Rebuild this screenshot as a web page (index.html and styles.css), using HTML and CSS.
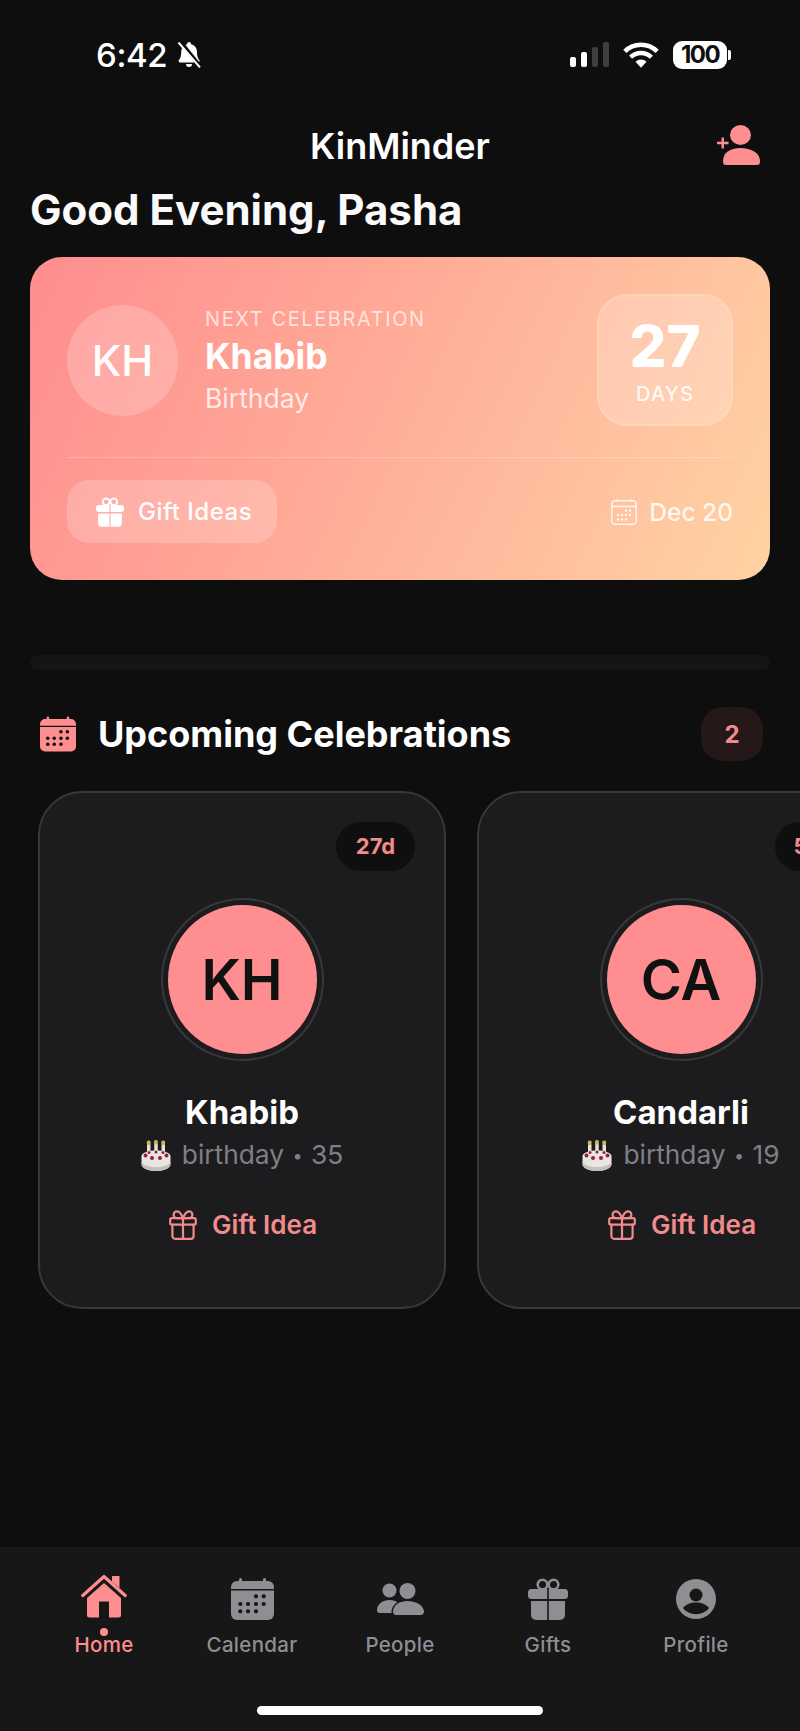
FILE: index.html
```html
<!DOCTYPE html>
<html lang="en">
  <head>
    <meta charset="UTF-8" />
    <meta name="viewport" content="width=device-width, initial-scale=1.0" />
    <title>KinMinder</title>
    <link rel="stylesheet" href="styles.css">
  </head>
  <body>
    <svg class="defs" width="0" height="0">
      <symbol id="gift-line" viewBox="0 0 28 30">
        <g fill="none" stroke="currentColor" stroke-width="2.2" stroke-linejoin="round" stroke-linecap="round">
          <rect x="1.2" y="8.2" width="25.6" height="6.4" rx="1.6" />
          <path d="M3.4 14.6V26a2.8 2.8 0 0 0 2.8 2.8h15.6a2.8 2.8 0 0 0 2.8-2.8V14.6" />
          <path d="M14 8.2v20.6" />
          <path d="M14 8.2C12.6 4.4 10.6 1.4 8 1.4a3.4 3.4 0 0 0 0 6.8h6zM14 8.2c1.4-3.8 3.4-6.8 6-6.8a3.4 3.4 0 0 1 0 6.8h-6z" />
        </g>
      </symbol>
      <symbol id="gift-fill" viewBox="0 0 40 42">
        <circle cx="14.5" cy="6.5" r="4.8" fill="none" stroke="currentColor" stroke-width="2.6" />
        <circle cx="25.5" cy="6.5" r="4.8" fill="none" stroke="currentColor" stroke-width="2.6" />
        <path d="M3.5 11H19.200v10H3.500A3.500 3.500 0 0 1 0 17.500v-3A3.500 3.500 0 0 1 3.500 11zM20.800 11h15.700a3.500 3.500 0 0 1 3.500 3.500v3a3.500 3.500 0 0 1-3.500 3.500H20.800z" fill="currentColor" />
        <path d="M3 23h16.200v19H8a5 5 0 0 1-5-5zM20.800 23H37v14a5 5 0 0 1-5 5H20.800z" fill="currentColor" />
      </symbol>
      <symbol id="calendar-fill" viewBox="0 0 43 42">
        <path d="M8 3V1.500a1.500 1.500 0 0 1 3 0V3h21V1.500a1.500 1.500 0 0 1 3 0V3h2a6 6 0 0 1 6 6v2H0V9a6 6 0 0 1 6-6z" fill="currentColor" />
        <path d="M0 12.500h43V36a6 6 0 0 1-6 6H6a6 6 0 0 1-6-6z" fill="currentColor" />
        <g fill="var(--dots)">
          <circle cx="25" cy="18.300" r="2.100" /><circle cx="32.700" cy="18.300" r="2.100" />
          <circle cx="9.300" cy="26" r="2.100" /><circle cx="17" cy="26" r="2.100" /><circle cx="25" cy="26" r="2.100" /><circle cx="32.700" cy="26" r="2.100" />
          <circle cx="9.300" cy="33.300" r="2.100" /><circle cx="17" cy="33.300" r="2.100" /><circle cx="25" cy="33.300" r="2.100" />
        </g>
      </symbol>
      <symbol id="cake" viewBox="0 0 30 31">
        <g fill="#e9e3d6"><rect x="6" y="4" width="3.500" height="12" rx="1" /><rect x="13.250" y="3" width="3.500" height="13" rx="1" /><rect x="20.500" y="4" width="3.500" height="12" rx="1" /></g>
        <g fill="#c9b45e"><rect x="5.800" y="0.500" width="3.800" height="4.500" rx="1.500" /><rect x="13" y="0" width="3.800" height="4.500" rx="1.500" /><rect x="20.300" y="0.500" width="3.800" height="4.500" rx="1.500" /></g>
        <path d="M0.500 16c0-3 6-5.500 14.500-5.500S29.500 13 29.500 16v8c0 4-6 7-14.500 7S.5 28 .5 24z" fill="#e8e6e3" />
        <path d="M0.500 22.500c3 3 7 4.500 14.500 4.500s11.500-1.500 14.500-4.500V24c0 4-6 7-14.500 7S.5 28 .5 24z" fill="#c4c0bc" />
        <g fill="#9b1f3c"><circle cx="4.500" cy="15.500" r="2" /><circle cx="11" cy="18" r="2" /><circle cx="19" cy="18" r="2" /><circle cx="25.500" cy="15.500" r="2" /><circle cx="8" cy="12.500" r="1.500" /><circle cx="15" cy="12" r="1.500" /><circle cx="22" cy="12.500" r="1.500" /></g>
      </symbol>
    </svg>

    <div class="phone">
      <div class="status">
        <div class="status-left">
          <span class="time">6:42</span>
          <svg class="bell" viewBox="0 0 27 26" width="27" height="26">
            <path d="M13 0a2 2 0 0 1 2 2.200c4 .9 6 4 6 8.300 0 2.600.5 5.500 2.200 7.500.8 1 .2 2.400-1 2.400H4c-1.200 0-1.800-1.400-1-2.400 1.700-2 2.200-4.900 2.200-7.500 0-4.300 2-7.400 6-8.300A2 2 0 0 1 13 0z" fill="#fff" />
            <path d="M10 22h6a3 3 0 0 1-6 0z" fill="#fff" />
            <path d="M4.500 0l21 26" stroke="#0e0e0f" stroke-width="4" />
            <path d="M2.500 0.500l21.500 25" stroke="#fff" stroke-width="2" />
          </svg>
        </div>
        <div class="status-right">
          <div class="signal">
            <span class="bar on h1"></span>
            <span class="bar on h2"></span>
            <span class="bar h3"></span>
            <span class="bar h4"></span>
          </div>
          <svg class="wifi" viewBox="0 0 36 26" width="36" height="26">
            <g fill="none" stroke="#fff" stroke-width="4.400">
              <path d="M1.800 9.400a23 23 0 0 1 32.400 0" />
              <path d="M7.600 15.200a14.800 14.800 0 0 1 20.800 0" />
            </g>
            <path d="M12.500 19.800a7.800 7.800 0 0 1 11 0L18 25.800z" fill="#fff" />
          </svg>
          <div class="battery"><span class="battery-level">100</span><span class="battery-tip"></span></div>
        </div>
      </div>

      <div class="topbar">
        <span></span>
        <div class="app-title">KinMinder</div>
        <svg class="add-person" viewBox="0 0 43 40" width="43" height="40">
          <ellipse cx="23.500" cy="10" rx="10.500" ry="10" fill="#ff8e90" />
          <path d="M6 36c0-8 7-13 17.500-13S43 28 43 36c0 3-1 4-3 4H9c-2 0-3-1-3-4z" fill="#ff8e90" />
          <path d="M0 18h11.500M5.750 12.500v11" stroke="#ff8e90" stroke-width="2.400" />
        </svg>
      </div>

      <h1 class="greeting">Good Evening, Pasha</h1>

      <div class="hero">
        <div class="hero-top">
          <div class="hero-avatar">KH</div>
          <div class="hero-info">
            <div class="hero-label">NEXT CELEBRATION</div>
            <div class="hero-name">Khabib</div>
            <div class="hero-type">Birthday</div>
          </div>
          <div class="days-box">
            <div class="days-num">27</div>
            <div class="days-label">DAYS</div>
          </div>
        </div>
        <div class="hero-divider"></div>
        <div class="hero-bottom">
          <div class="gift-btn">
            <svg class="gift-btn-icon" width="28" height="30"><use href="#gift-fill" /></svg>
            <span>Gift Ideas</span>
          </div>
          <div class="hero-date">
            <svg viewBox="0 0 26 27" width="26" height="27" fill="none" stroke="currentColor" stroke-width="1.500">
              <rect x="0.800" y="2.800" width="24.400" height="23.400" rx="3.500" />
              <path d="M0.800 8.500h24.400M6.500 0.500v3M19.500 0.500v3" />
              <g fill="currentColor" stroke="none">
                <circle cx="15" cy="12.500" r="1.200" /><circle cx="19" cy="12.500" r="1.200" />
                <circle cx="7" cy="17" r="1.200" /><circle cx="11" cy="17" r="1.200" /><circle cx="15" cy="17" r="1.200" /><circle cx="19" cy="17" r="1.200" />
                <circle cx="7" cy="21.500" r="1.200" /><circle cx="11" cy="21.500" r="1.200" /><circle cx="15" cy="21.500" r="1.200" />
              </g>
            </svg>
            <span>Dec 20</span>
          </div>
        </div>
      </div>

      <div class="placeholder-bar"></div>

      <div class="section-head">
        <svg class="section-icon" width="36" height="36"><use href="#calendar-fill" /></svg>
        <h2 class="section-title">Upcoming Celebrations</h2>
        <div class="count-badge">2</div>
      </div>

      <div class="cards">
        <div class="person-card">
          <div class="days-pill">27d</div>
          <div class="ring"><div class="person-avatar">KH</div></div>
          <div class="person-name">Khabib</div>
          <div class="person-sub">
            <svg class="cake" width="30" height="31"><use href="#cake" /></svg>
            <span>birthday <span class="sep">&bull;</span> 35</span>
          </div>
          <div class="gift-link">
            <svg width="28" height="30"><use href="#gift-line" /></svg>
            <span>Gift Idea</span>
          </div>
        </div>

        <div class="person-card">
          <div class="days-pill">53d</div>
          <div class="ring"><div class="person-avatar">CA</div></div>
          <div class="person-name">Candarli</div>
          <div class="person-sub">
            <svg class="cake" width="30" height="31"><use href="#cake" /></svg>
            <span>birthday <span class="sep">&bull;</span> 19</span>
          </div>
          <div class="gift-link">
            <svg width="28" height="30"><use href="#gift-line" /></svg>
            <span>Gift Idea</span>
          </div>
        </div>
      </div>

      <div class="tabbar">
        <div class="tabs">
          <div class="tab active">
            <div class="tab-icon home-icon">
              <svg viewBox="0 0 46 44" width="46" height="44">
                <path d="M1.800 21.500L23 2.500l21.200 19" fill="none" stroke="currentColor" stroke-width="3.200" stroke-linecap="round" stroke-linejoin="round" />
                <path d="M31 2h7.500v12L31 7.500z" fill="currentColor" />
                <path d="M23 9l17 15v17a2.500 2.500 0 0 1-2.500 2.500H28V27.500H18V43.500H8.500A2.500 2.500 0 0 1 6 41V24z" fill="currentColor" />
              </svg>
            </div>
            <span class="tab-dot"></span>
            <div class="tab-label">Home</div>
          </div>
          <div class="tab">
            <div class="tab-icon"><svg width="43" height="42"><use href="#calendar-fill" /></svg></div>
            <div class="tab-label">Calendar</div>
          </div>
          <div class="tab">
            <div class="tab-icon">
              <svg viewBox="0 0 47 32" width="47" height="32">
                <circle cx="12.500" cy="7.500" r="7" fill="currentColor" />
                <circle cx="30.500" cy="8" r="8" fill="currentColor" />
                <path d="M0 27.500C0 21 6 17 12.500 17c3 0 5.700.8 7.800 2.200-3.300 2-5.300 5-5.800 8.800 0 .8 0 1.500.2 2H3c-2 0-3-1-3-2.500z" fill="currentColor" />
                <path d="M16 28c.8-6.500 7-10 14.500-10S46 21.500 47 28c.2 2-1 4-3 4H19c-2 0-3.300-2-3-4z" fill="currentColor" />
              </svg>
            </div>
            <div class="tab-label">People</div>
          </div>
          <div class="tab">
            <div class="tab-icon"><svg width="40" height="42"><use href="#gift-fill" /></svg></div>
            <div class="tab-label">Gifts</div>
          </div>
          <div class="tab">
            <div class="tab-icon">
              <svg viewBox="0 0 40 40" width="40" height="40">
                <circle cx="20" cy="20" r="20" fill="currentColor" />
                <circle cx="20" cy="16" r="6.500" fill="#171718" />
                <path d="M7 29c2.500-3.500 7.500-5.500 13-5.500S30.500 25.500 33 29c-3 4-8 6.200-13 6.200S10 33 7 29z" fill="#171718" />
              </svg>
            </div>
            <div class="tab-label">Profile</div>
          </div>
        </div>
        <div class="home-indicator"></div>
      </div>
    </div>
  </body>
</html>
```

FILE: styles.css
```css
* {
  box-sizing: border-box;
}
body {
  margin: 0;
  background-color: #0e0e0f;
  font-family: "Inter", "Liberation Sans", sans-serif;
  color: #fff;
}
.defs {
  position: absolute;
}
.phone {
  width: 800px;
  height: 1731px;
  display: flex;
  flex-direction: column;
  overflow: hidden;
}

/* status bar */
.status {
  height: 106px;
  padding: 39px 69px 0 96px;
  display: flex;
  justify-content: space-between;
  align-items: flex-start;
}
.status-left,
.status-right {
  display: flex;
  align-items: center;
  height: 32px;
}
.time {
  font-size: 33px;
  font-weight: 500;
  line-height: 32px;
  letter-spacing: -0.4px;
}
.bell {
  margin-left: 9px;
}
.signal {
  display: flex;
  align-items: flex-end;
  gap: 5px;
  height: 24px;
  margin-right: 14px;
}
.bar {
  width: 6px;
  border-radius: 2px;
  background: #3e3e40;
}
.bar.on {
  background: #fff;
}
.h1 { height: 10px; }
.h2 { height: 15px; }
.h3 { height: 20px; }
.h4 { height: 25px; }
.battery {
  display: flex;
  align-items: center;
  margin-left: 14px;
}
.battery-level {
  width: 54px;
  height: 28px;
  border-radius: 9px;
  background: #fff;
  color: #0e0e0f;
  font-size: 24px;
  font-weight: 700;
  line-height: 28px;
  letter-spacing: -1.5px;
  text-align: center;
}
.battery-tip {
  width: 3px;
  height: 10px;
  margin-left: 1px;
  border-radius: 0 2px 2px 0;
  background: #fff;
}

/* header */
.topbar {
  display: grid;
  grid-template-columns: 1fr auto 1fr;
  align-items: center;
  padding: 0 40px;
  height: 80px;
}
.app-title {
  font-size: 36px;
  font-weight: 600;
}
.add-person {
  justify-self: end;
  margin-top: -2px;
}
.greeting {
  margin: 0 0 0 30px;
  font-size: 42px;
  line-height: 48px;
  font-weight: 700;
  color: #fafafa;
}

/* next celebration */
.hero {
  margin: 23px 30px 0;
  height: 323px;
  padding: 37px;
  border-radius: 32px;
  background: linear-gradient(115deg, #ff8d8f 0%, #ffa695 38%, #ffbf9f 72%, #ffd3a3 100%);
}
.hero-top {
  display: flex;
  align-items: center;
}
.hero-avatar {
  width: 111px;
  height: 111px;
  border-radius: 50%;
  background: rgba(255, 255, 255, 0.2);
  display: flex;
  align-items: center;
  justify-content: center;
  font-size: 43px;
  font-weight: 500;
}
.hero-info {
  margin-left: 27px;
  flex: 1;
}
.hero-label {
  font-size: 20px;
  line-height: 24px;
  letter-spacing: 1.6px;
  color: rgba(255, 255, 255, 0.7);
}
.hero-name {
  font-size: 35.500px;
  line-height: 44px;
  font-weight: 700;
  margin-top: 4px;
}
.hero-type {
  font-size: 26.500px;
  line-height: 32px;
  margin-top: 3px;
  color: rgba(255, 255, 255, 0.8);
}
.days-box {
  width: 136px;
  height: 132px;
  border-radius: 30px;
  background: rgba(255, 255, 255, 0.2);
  border: 2px solid rgba(255, 255, 255, 0.12);
  text-align: center;
  padding-top: 18px;
}
.days-num {
  font-size: 58px;
  line-height: 64px;
  font-weight: 800;
}
.days-label {
  font-size: 20px;
  line-height: 24px;
  font-weight: 500;
  letter-spacing: 1.200px;
  color: rgba(255, 255, 255, 0.9);
  margin-top: 4px;
}
.hero-divider {
  height: 1px;
  margin-top: 31px;
  background: rgba(255, 255, 255, 0.22);
}
.hero-bottom {
  display: flex;
  justify-content: space-between;
  align-items: center;
  margin-top: 22px;
}
.gift-btn {
  width: 210px;
  height: 63px;
  border-radius: 22px;
  background: rgba(255, 255, 255, 0.2);
  display: flex;
  align-items: center;
  padding-left: 29px;
  gap: 14px;
  font-size: 24px;
  font-weight: 500;
  letter-spacing: 0.5px;
}
.hero-date {
  display: flex;
  align-items: center;
  gap: 12px;
  font-size: 24.500px;
  font-weight: 500;
  color: rgba(255, 255, 255, 0.85);
}

.placeholder-bar {
  height: 15px;
  margin: 75px 30px 0;
  border-radius: 8px;
  background: #151516;
}

/* upcoming */
.section-head {
  display: flex;
  align-items: center;
  margin-top: 37px;
  padding: 0 37px 0 40px;
  height: 54px;
}
.section-icon {
  --dots: #0e0e0f;
  color: #ff8e90;
}
.section-title {
  flex: 1;
  margin: 0 0 0 22px;
  font-size: 36px;
  font-weight: 700;
}
.count-badge {
  width: 62px;
  height: 54px;
  border-radius: 22px;
  background: #241918;
  color: #f28b8c;
  font-size: 24px;
  font-weight: 700;
  display: flex;
  align-items: center;
  justify-content: center;
}
.cards {
  display: flex;
  gap: 31px;
  margin-top: 30px;
  padding-left: 38px;
}
.person-card {
  position: relative;
  flex: 0 0 408px;
  height: 518px;
  padding-top: 105px;
  border: 2px solid #38383a;
  border-radius: 44px;
  background: #1c1c1e;
  display: flex;
  flex-direction: column;
  align-items: center;
}
.days-pill {
  position: absolute;
  top: 29px;
  right: 29px;
  width: 79px;
  height: 49px;
  border-radius: 25px;
  background: #0f0f10;
  color: #f28b8c;
  font-size: 22px;
  font-weight: 700;
  line-height: 49px;
  text-align: center;
}
.ring {
  width: 163px;
  height: 163px;
  padding: 5px;
  border: 2px solid #38383a;
  border-radius: 50%;
}
.person-avatar {
  width: 149px;
  height: 149px;
  border-radius: 50%;
  background: #ff8e90;
  color: #111;
  display: flex;
  align-items: center;
  justify-content: center;
  font-size: 56px;
  font-weight: 600;
}
.person-name {
  margin-top: 29px;
  font-size: 33px;
  line-height: 44px;
  font-weight: 700;
}
.person-sub {
  display: flex;
  align-items: center;
  gap: 11px;
  margin-top: 3px;
  font-size: 26.300px;
  line-height: 36px;
  color: #7f7f84;
}
.sep {
  font-size: 18px;
  vertical-align: 2px;
  margin: 0 1px;
}
.gift-link {
  display: flex;
  align-items: center;
  gap: 15px;
  margin-top: 35px;
  margin-left: 2px;
  color: #f28b8c;
  font-size: 26px;
  font-weight: 600;
}

/* bottom tabs */
.tabbar {
  margin-top: auto;
  height: 184px;
  background: #171718;
  padding: 27px 30px 0;
}
.tabs {
  display: flex;
}
.tab {
  position: relative;
  flex: 1;
  display: flex;
  flex-direction: column;
  align-items: center;
  --dots: #171718;
  color: #8e8e93;
}
.tab.active {
  color: #ff8e90;
}
.tab-icon {
  height: 50px;
  display: flex;
  align-items: center;
  justify-content: center;
}
.home-icon svg {
  margin-top: -6px;
}
.tab-dot {
  position: absolute;
  top: 54px;
  width: 8px;
  height: 8px;
  border-radius: 50%;
  background: #ff8e90;
}
.tab-label {
  margin-top: 9px;
  font-size: 20.500px;
  line-height: 24px;
  font-weight: 500;
  letter-spacing: 0.3px;
}
.home-indicator {
  width: 286px;
  height: 9px;
  margin: 49px auto 0;
  border-radius: 5px;
  background: #fff;
}
```
